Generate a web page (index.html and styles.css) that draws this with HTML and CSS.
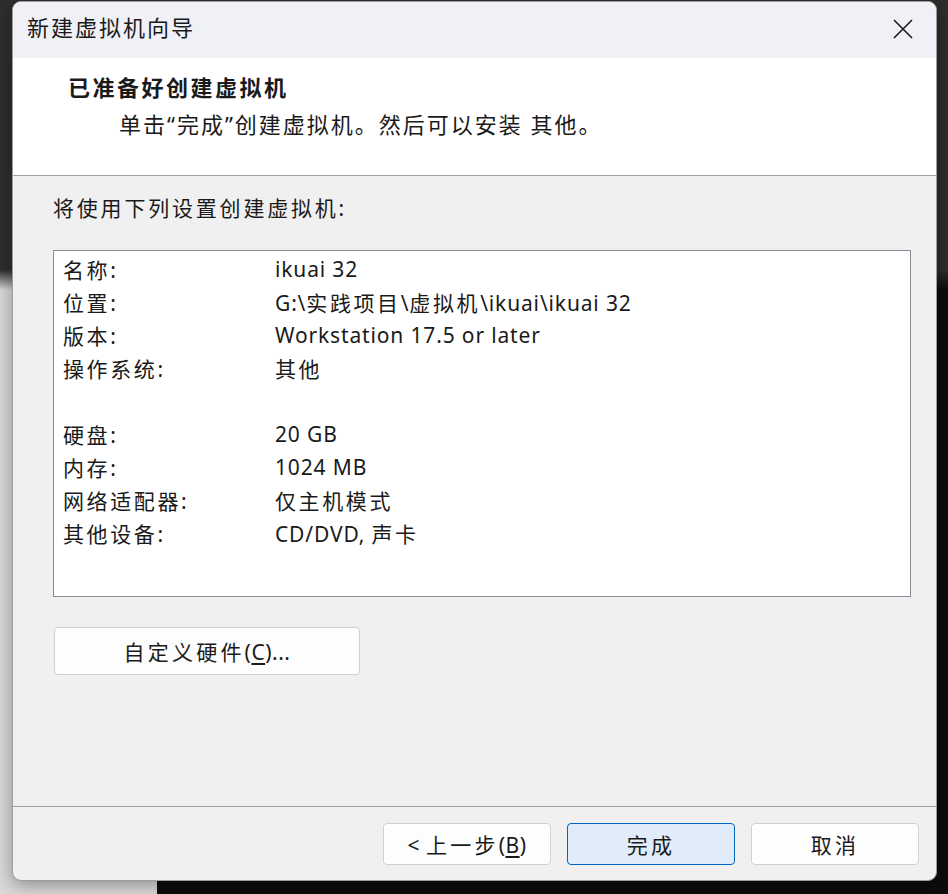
FILE: index.html
```html
<!DOCTYPE html>
<html lang="zh-CN">
<head>
<meta charset="UTF-8">
<title>新建虚拟机向导</title>
<link rel="stylesheet" href="styles.css">
</head>
<body>
<div class="desktop">
  <div class="wizard">
    <div class="title-bar">
      <span class="title">新建虚拟机向导</span>
      <span class="close-btn">
        <svg width="22" height="22" viewBox="0 0 22 22"><path d="M2 2 L20 20 M20 2 L2 20" stroke="#1a1a1a" stroke-width="1.6" fill="none"/></svg>
      </span>
    </div>
    <div class="wizard-header">
      <div class="header-title">已准备好创建虚拟机</div>
      <div class="header-sub">单击“完成”创建虚拟机。然后可以安装 其他。</div>
    </div>
    <div class="wizard-body">
      <div class="intro">将使用下列设置创建虚拟机:</div>
      <div class="summary">
        <span class="key">名称:</span><span class="val">ikuai 32</span>
        <span class="key">位置:</span><span class="val">G:\<span class="zh">实践项目</span>\<span class="zh">虚拟机</span>\ikuai\ikuai 32</span>
        <span class="key">版本:</span><span class="val">Workstation 17.5 or later</span>
        <span class="key">操作系统:</span><span class="val zh">其他</span>
        <span class="key">&nbsp;</span><span class="val">&nbsp;</span>
        <span class="key">硬盘:</span><span class="val">20 GB</span>
        <span class="key">内存:</span><span class="val">1024 MB</span>
        <span class="key">网络适配器:</span><span class="val zh">仅主机模式</span>
        <span class="key">其他设备:</span><span class="val">CD/DVD, <span class="zh">声卡</span></span>
      </div>
      <button class="btn custom-btn"><span class="zh">自定义硬件</span>(<u>C</u>)...</button>
    </div>
    <div class="wizard-footer">
      <button class="btn">&lt; <span class="zh">上一步</span>(<u>B</u>)</button>
      <button class="btn primary"><span class="zh">完成</span></button>
      <button class="btn"><span class="zh">取消</span></button>
    </div>
  </div>
</div>
</body>
</html>
```

FILE: styles.css
```css
html, body {
  margin: 0;
  height: 100%;
}
body {
  font-family: 'Noto Sans', 'Noto Sans CJK SC', sans-serif;
  color: #1a1a1a;
  background: linear-gradient(to right, #d9d9d9 0, #d9d9d9 157px, #0c0c0c 157px);
  overflow: hidden;
}
.desktop {
  padding: 1px 0 0 12px;
  height: 100%;
  box-sizing: border-box;
  background: linear-gradient(to bottom, #2e2e2e 0, #2e2e2e 270px, transparent 290px);
}
.wizard {
  width: 925px;
  height: 880px;
  box-sizing: border-box;
  display: flex;
  flex-direction: column;
  background: #f0f0f0;
  border: 1px solid #9c9c9c;
  border-radius: 9px;
  overflow: hidden;
  box-shadow: 0 4px 18px rgba(0,0,0,0.35);
}
.title-bar {
  height: 56px;
  flex: none;
  box-sizing: border-box;
  display: flex;
  align-items: center;
  justify-content: space-between;
  background: #f0f1f6;
  padding: 0 22px 2px 14px;
}
.title {
  font-size: 22px;
  letter-spacing: 2px;
  margin-bottom: 6px;
}
.close-btn {
  display: flex;
}
.wizard-header {
  height: 118px;
  flex: none;
  box-sizing: border-box;
  background: #ffffff;
  border-bottom: 1px solid #a0a0a0;
  padding: 13px 0 0 55px;
}
.header-title {
  font-size: 22px;
  font-weight: bold;
  letter-spacing: 2.5px;
  line-height: 32px;
}
.header-sub {
  font-size: 22px;
  letter-spacing: 2px;
  line-height: 32px;
  margin: 5px 0 0 51px;
}
.wizard-body {
  flex: 1;
  padding: 17px 25px 0 40px;
}
.intro {
  font-size: 21px;
  letter-spacing: 2.8px;
  line-height: 30px;
}
.summary {
  margin-top: 27px;
  height: 347px;
  box-sizing: border-box;
  background: #ffffff;
  border: 1px solid #8b8b98;
  padding: 1px 9px;
  display: grid;
  grid-template-columns: 212px 1fr;
  grid-auto-rows: 33px;
  align-items: center;
  font-size: 21px;
  letter-spacing: 0.85px;
}
.key, .zh {
  letter-spacing: 2.6px;
}
.btn {
  font-family: inherit;
  font-size: 21px;
  color: #1a1a1a;
  background: #fdfdfd;
  border: 1px solid #d0d0d0;
  border-radius: 4px;
  width: 168px;
  height: 42px;
  padding: 0;
  letter-spacing: 0.5px;
}
.btn .zh {
  letter-spacing: 3.2px;
}
.btn u {
  text-underline-offset: 3px;
}
.custom-btn {
  margin-top: 30px;
  margin-left: 1px;
  width: 306px;
  height: 48px;
}
.wizard-footer {
  height: 74px;
  flex: none;
  box-sizing: border-box;
  border-top: 1px solid #a0a0a0;
  display: flex;
  justify-content: flex-end;
  gap: 16px;
  padding: 16px 17px 0 0;
}
.primary {
  background: #e0ecf9;
  border-color: #0067c0;
}
```
